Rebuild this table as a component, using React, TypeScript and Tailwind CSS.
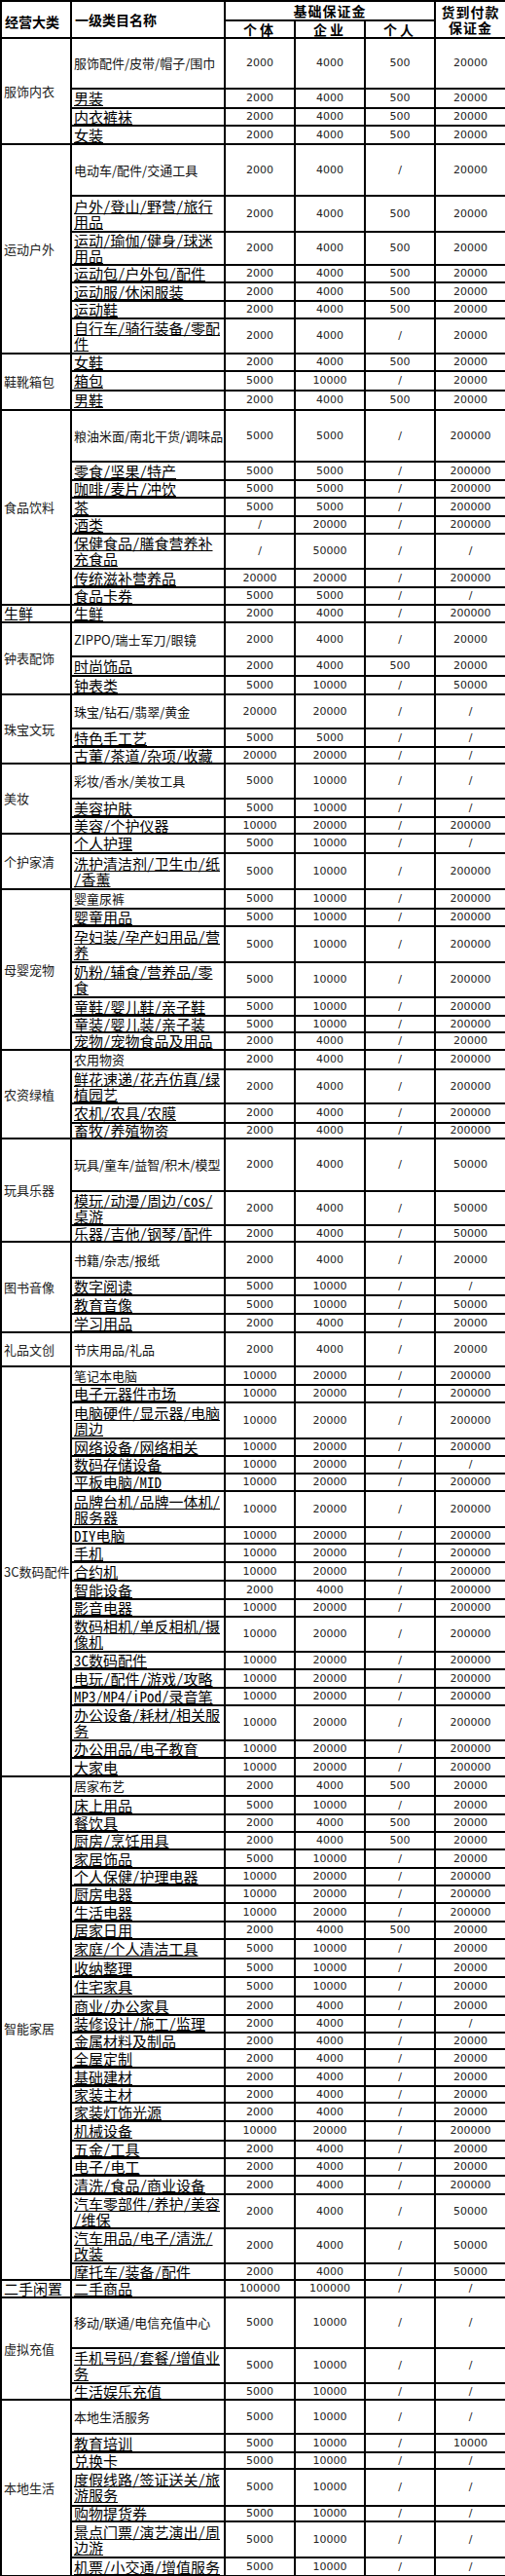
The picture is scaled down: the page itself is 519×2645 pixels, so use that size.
import React from "react";

// kind: "l" = linked item (underlined, larger), "p" = plain item
type Row = [string, string, "l" | "p", number];
type Group = [string, Row[]];

const A = "2000 4000 500 20000";
const B = "2000 4000 / 20000";
const C = "5000 10000 / 200000";
const D = "10000 20000 / 200000";
const E = "5000 10000 / /";
const F = "2000 4000 / 200000";
const G = "5000 10000 / 20000";
const T = "2000 4000 / 50000";

// last number of each row = y of the row's bottom line in the original sheet
const groups: Group[] = [
  ["服饰内衣", [
    ["服饰配件/皮带/帽子/围巾", A, "p", 90],
    ["男装", A, "l", 110],
    ["内衣裤袜", A, "l", 128],
    ["女装", A, "l", 147],
  ]],
  ["运动户外", [
    ["电动车/配件/交通工具", B, "p", 200],
    ["户外/登山/野营/旅行\n用品", A, "l", 237],
    ["运动/瑜伽/健身/球迷\n用品", A, "l", 271],
    ["运动包/户外包/配件", A, "l", 289],
    ["运动服/休闲服装", A, "l", 308],
    ["运动鞋", A, "l", 326],
    ["自行车/骑行装备/零配\n件", B, "l", 362],
  ]],
  ["鞋靴箱包", [
    ["女鞋", A, "l", 380],
    ["箱包", G, "l", 400],
    ["男鞋", A, "l", 420],
  ]],
  ["食品饮料", [
    ["粮油米面/南北干货/调味品", "5000 5000 / 200000", "p", 473],
    ["零食/坚果/特产", "5000 5000 / 200000", "l", 492],
    ["咖啡/麦片/冲饮", "5000 5000 / 200000", "l", 510],
    ["茶", "5000 5000 / 200000", "l", 529],
    ["酒类", "/ 20000 / 200000", "l", 547],
    ["保健食品/膳食营养补\n充食品", "/ 50000 / /", "l", 583],
    ["传统滋补营养品", "20000 20000 / 200000", "l", 602],
    ["食品卡券", "5000 5000 / /", "l", 620],
  ]],
  ["生鲜", [["生鲜", F, "l", 638]]],
  ["钟表配饰", [
    ["ZIPPO/瑞士军刀/眼镜", B, "p", 673],
    ["时尚饰品", A, "l", 693],
    ["钟表类", "5000 10000 / 50000", "l", 712],
  ]],
  ["珠宝文玩", [
    ["珠宝/钻石/翡翠/黄金", "20000 20000 / /", "p", 747],
    ["特色手工艺", "5000 5000 / /", "l", 766],
    ["古董/茶道/杂项/收藏", "20000 20000 / /", "l", 783],
  ]],
  ["美妆", [
    ["彩妆/香水/美妆工具", E, "p", 819],
    ["美容护肤", E, "l", 838],
    ["美容/个护仪器", D.replace("10000 20000", "10000 20000"), "l", 855],
  ]],
  ["个护家清", [
    ["个人护理", E, "l", 875],
    ["洗护清洁剂/卫生巾/纸\n/香薰", C, "l", 912],
  ]],
  ["母婴宠物", [
    ["婴童尿裤", C, "p", 932],
    ["婴童用品", C, "l", 950],
    ["孕妇装/孕产妇用品/营\n养", C, "l", 987],
    ["奶粉/辅食/营养品/零\n食", C, "l", 1023],
    ["童鞋/婴儿鞋/亲子鞋", C, "l", 1042],
    ["童装/婴儿装/亲子装", C, "l", 1059],
    ["宠物/宠物食品及用品", B, "l", 1077],
  ]],
  ["农资绿植", [
    ["农用物资", F, "p", 1097],
    ["鲜花速递/花卉仿真/绿\n植园艺", F, "l", 1132],
    ["农机/农具/农膜", F, "l", 1152],
    ["畜牧/养殖物资", F, "l", 1168],
  ]],
  ["玩具乐器", [
    ["玩具/童车/益智/积木/模型", T, "p", 1222],
    ["模玩/动漫/周边/cos/\n桌游", T, "l", 1257],
    ["乐器/吉他/钢琴/配件", T, "l", 1274],
  ]],
  ["图书音像", [
    ["书籍/杂志/报纸", B, "p", 1311],
    ["数字阅读", E, "l", 1329],
    ["教育音像", "5000 10000 / 50000", "l", 1348],
    ["学习用品", B, "l", 1367],
  ]],
  ["礼品文创", [["节庆用品/礼品", B, "p", 1402]]],
  ["3C数码配件", [
    ["笔记本电脑", D, "p", 1421],
    ["电子元器件市场", D, "l", 1439],
    ["电脑硬件/显示器/电脑\n周边", D, "l", 1476],
    ["网络设备/网络相关", D, "l", 1494],
    ["数码存储设备", "10000 20000 / /", "l", 1512],
    ["平板电脑/MID", D, "l", 1530],
    ["品牌台机/品牌一体机/\n服务器", D, "l", 1567],
    ["DIY电脑", D, "l", 1584],
    ["手机", D, "l", 1603],
    ["合约机", D, "l", 1622],
    ["智能设备", F, "l", 1641],
    ["影音电器", D, "l", 1659],
    ["数码相机/单反相机/摄\n像机", D, "l", 1695],
    ["3C数码配件", D, "l", 1713],
    ["电玩/配件/游戏/攻略", D, "l", 1732],
    ["MP3/MP4/iPod/录音笔", D, "l", 1750],
    ["办公设备/耗材/相关服\n务", D, "l", 1786],
    ["办公用品/电子教育", D, "l", 1804],
    ["大家电", D, "l", 1823],
  ]],
  ["智能家居", [
    ["居家布艺", A, "p", 1843],
    ["床上用品", G, "l", 1862],
    ["餐饮具", A, "l", 1880],
    ["厨房/烹饪用具", A, "l", 1898],
    ["家居饰品", G, "l", 1917],
    ["个人保健/护理电器", D, "l", 1935],
    ["厨房电器", D, "l", 1953],
    ["生活电器", D, "l", 1972],
    ["居家日用", A, "l", 1990],
    ["家庭/个人清洁工具", G, "l", 2010],
    ["收纳整理", G, "l", 2029],
    ["住宅家具", G, "l", 2049],
    ["商业/办公家具", B, "l", 2068],
    ["装修设计/施工/监理", "2000 4000 / /", "l", 2086],
    ["金属材料及制品", B, "l", 2103],
    ["全屋定制", B, "l", 2122],
    ["基础建材", B, "l", 2141],
    ["家装主材", B, "l", 2158],
    ["家装灯饰光源", B, "l", 2177],
    ["机械设备", D, "l", 2197],
    ["五金/工具", B, "l", 2215],
    ["电子/电工", B, "l", 2233],
    ["清洗/食品/商业设备", F, "l", 2252],
    ["汽车零部件/养护/美容\n/维保", T, "l", 2287],
    ["汽车用品/电子/清洗/\n改装", T, "l", 2323],
    ["摩托车/装备/配件", T, "l", 2340],
  ]],
  ["二手闲置", [["二手商品", "100000 100000 / /", "l", 2358]]],
  ["虚拟充值", [
    ["移动/联通/电信充值中心", E, "p", 2410],
    ["手机号码/套餐/增值业\n务", E, "l", 2446],
    ["生活娱乐充值", E, "l", 2463],
  ]],
  ["本地生活", [
    ["本地生活服务", E, "p", 2498],
    ["教育培训", "5000 10000 / 10000", "l", 2517],
    ["兑换卡", E, "l", 2534],
    ["度假线路/签证送关/旅\n游服务", E, "l", 2572],
    ["购物提货券", E, "l", 2588],
    ["景点门票/演艺演出/周\n边游", E, "l", 2625],
    ["机票/小交通/增值服务", E, "l", 2644],
  ]],
];

const HEADER_END = 38;
const bigCats = ["生鲜", "二手闲置"];

// SimSun-like: CJK full width, Latin half width
const mono = "font-['Noto_Sans_Mono_CJK_SC','Noto_Sans_CJK_SC',sans-serif]";
const sans = "font-['Noto_Sans_CJK_SC',sans-serif]";

export default function App() {
  const td = "border-2 border-black p-0";
  let prev = HEADER_END;
  return (
    <div className="w-[519px] bg-white">
      <table className="w-[519px] table-fixed border-collapse">
        <colgroup>
          <col className="w-[72px]" />
          <col className="w-[158px]" />
          <col className="w-[72px]" />
          <col className="w-[72px]" />
          <col className="w-[72px]" />
          <col className="w-[73px]" />
        </colgroup>
        <thead className={`${sans} text-[14px] font-bold text-black`}>
          <tr className="h-[20px]">
            <td rowSpan={2} className={`${td} pl-[3px] pt-[3px] align-middle leading-[16px]`}>经营大类</td>
            <td rowSpan={2} className={`${td} pl-[3px] align-middle leading-[16px]`}>一级类目名称</td>
            <td colSpan={3} className={`${td} text-center leading-[16px] tracking-[1px]`}>基础保证金</td>
            <td rowSpan={2} className={`${td} text-center leading-[16px] tracking-[1px]`}>
              货到付款
              <br />
              保证金
            </td>
          </tr>
          <tr className="h-[18px]">
            <td className={`${td} text-center leading-[16px] tracking-[3px]`}>个体</td>
            <td className={`${td} text-center leading-[16px] tracking-[3px]`}>企业</td>
            <td className={`${td} text-center leading-[16px] tracking-[3px]`}>个人</td>
          </tr>
        </thead>
        <tbody>
          {groups.map(([cat, rows]) =>
            rows.map(([name, vals, kind, end], i) => {
              const h = end - prev;
              prev = end;
              const twoLines = name.includes("\n");
              const nameCls =
                kind === "l"
                  ? `${mono} text-[15px] text-black underline decoration-1 underline-offset-[1px] ${
                      twoLines ? "leading-[16px]" : "leading-[14px]"
                    }`
                  : `${sans} text-[13px] leading-[14px] text-[#111]`;
              return (
                <tr key={cat + name} style={{ height: h }}>
                  {i === 0 && (
                    <td
                      rowSpan={rows.length}
                      className={`${td} pl-[2px] align-middle whitespace-nowrap leading-[14px] ${
                        bigCats.includes(cat)
                          ? `${mono} text-[15px] text-black`
                          : `${sans} text-[13px] text-[#222]`
                      }`}
                    >
                      {cat}
                    </td>
                  )}
                  <td className={`${td} pl-[2px] align-middle whitespace-pre ${nameCls}`}>{name}</td>
                  {vals.split(" ").map((v, j) => (
                    <td
                      key={j}
                      className={`${td} text-center align-middle font-['DejaVu_Sans',sans-serif] text-[11px] leading-[14px] text-[#222]`}
                    >
                      {v}
                    </td>
                  ))}
                </tr>
              );
            })
          )}
        </tbody>
      </table>
    </div>
  );
}
